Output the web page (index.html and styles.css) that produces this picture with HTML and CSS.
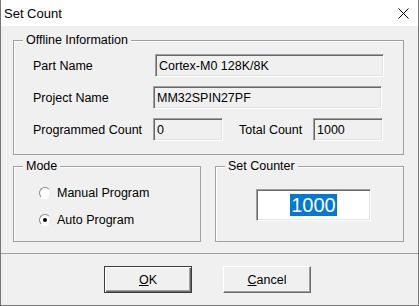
FILE: index.html
```html
<!DOCTYPE html>
<html lang="en">
<head>
    <meta charset="UTF-8">
    <meta name="viewport" content="width=device-width, initial-scale=1.0">
    <title>Set Count</title>
    <link rel="stylesheet" href="styles.css">
</head>
<body>
    <div class="window">
        <div class="titlebar">
            <span class="title">Set Count</span>
            <svg class="close" width="11" height="11" viewBox="0 0 11 11">
                <path d="M0.5 0.5 L10.5 10.5 M10.5 0.5 L0.5 10.5" stroke="#000" stroke-width="1" fill="none"/>
            </svg>
        </div>

        <div class="client">
            <div class="group offline">
                <span class="group-title">Offline Information</span>
                <div class="row">
                    <span class="label">Part Name</span>
                    <span class="field field-part">Cortex-M0 128K/8K</span>
                </div>
                <div class="row">
                    <span class="label">Project Name</span>
                    <span class="field field-project">MM32SPIN27PF</span>
                </div>
                <div class="row">
                    <span class="label">Programmed Count</span>
                    <span class="field field-small">0</span>
                    <span class="label label-total">Total Count</span>
                    <span class="field field-small">1000</span>
                </div>
            </div>

            <div class="group-row">
                <div class="group mode">
                    <span class="group-title">Mode</span>
                    <label class="radio"><span class="dot"></span>Manual Program</label>
                    <label class="radio"><span class="dot checked"></span>Auto Program</label>
                </div>
                <div class="group counter">
                    <span class="group-title">Set Counter</span>
                    <div class="counter-input"><span class="selected">1000</span></div>
                </div>
            </div>
        </div>

        <div class="footer">
            <div class="btn default"><u>O</u>K</div>
            <div class="btn"><u>C</u>ancel</div>
        </div>
    </div>
</body>
</html>
```

FILE: styles.css
```css
body {
    margin: 0;
    font-family: "Liberation Sans", Arial, sans-serif;
    font-size: 12.5px;
    color: #000;
    background-color: #f0f0f0;
}
.window {
    width: 419px;
    height: 306px;
    box-sizing: border-box;
    border: 1px solid #777;
    border-top: none;
    background-color: #f0f0f0;
    display: flex;
    flex-direction: column;
}
.titlebar {
    height: 26px;
    background-color: #fff;
    display: flex;
    align-items: center;
    padding-left: 3px;
}
.title {
    font-size: 13px;
}
.close {
    margin-left: auto;
    margin-right: 9px;
}
.client {
    padding: 14px 14px 0 12px;
}
.group {
    position: relative;
    box-sizing: border-box;
    border: 1px solid #a0a0a0;
    box-shadow: inset 1px 1px #fff;
}
.group-title {
    position: absolute;
    top: -8px;
    left: 9px;
    padding: 0 3px;
    line-height: 15px;
    background-color: #f0f0f0;
}
.offline {
    height: 115px;
    padding: 13px 0 0 19px;
}
.row {
    display: flex;
    align-items: center;
    height: 23px;
    margin-bottom: 9px;
}
.label {
    width: 120px;
}
.label-total {
    width: 74px;
    margin-left: 16px;
}
.field {
    box-sizing: border-box;
    height: 23px;
    display: flex;
    align-items: center;
    padding-left: 3px;
    border: 1px solid;
    border-color: #a0a0a0 #fff #fff #a0a0a0;
    box-shadow: inset 1px 1px #696969, inset -1px -1px #e3e3e3;
}
.field-part {
    width: 229px;
    margin-left: 2px;
}
.field-project {
    width: 229px;
}
.field-small {
    width: 70px;
}
.group-row {
    display: flex;
    gap: 14px;
    margin-top: 11px;
}
.mode {
    width: 188px;
    height: 76px;
    padding: 18px 0 0 25px;
}
.radio {
    display: flex;
    align-items: center;
    height: 15px;
    margin-bottom: 12px;
}
.dot {
    position: relative;
    box-sizing: border-box;
    width: 12px;
    height: 12px;
    margin-right: 6px;
    border-radius: 50%;
    border: 1px solid;
    border-color: #8a8a8a #e6e6e6 #fff #8a8a8a;
    background-color: #fff;
}
.dot.checked::after {
    content: "";
    position: absolute;
    left: 3px;
    top: 3px;
    width: 4px;
    height: 4px;
    border-radius: 50%;
    background-color: #000;
}
.counter {
    width: 189px;
    height: 76px;
    padding: 22px 0 0 40px;
}
.counter-input {
    box-sizing: border-box;
    width: 115px;
    height: 32px;
    display: flex;
    align-items: center;
    justify-content: center;
    background-color: #fff;
    border: 1px solid;
    border-color: #a0a0a0 #fff #fff #a0a0a0;
    box-shadow: inset 1px 1px #696969, inset -1px -1px #e3e3e3;
    font-size: 20px;
}
.selected {
    background-color: #0078d7;
    color: #fff;
    line-height: 22px;
    padding: 0 1px;
}
.footer {
    margin-top: 11px;
    border-top: 1px solid #a0a0a0;
    padding: 12px 0 0 103px;
    display: flex;
    gap: 31px;
}
.btn {
    box-sizing: border-box;
    width: 88px;
    height: 27px;
    display: flex;
    align-items: center;
    justify-content: center;
    background-color: #f0f0f0;
    border: 1px solid;
    border-color: #fff #696969 #696969 #fff;
    box-shadow: inset -1px -1px #a0a0a0;
}
.btn.default {
    border-color: #3c3c3c;
    box-shadow: inset 1px 1px #fff, inset -1px -1px #696969, inset -2px -2px #a0a0a0;
}
```
